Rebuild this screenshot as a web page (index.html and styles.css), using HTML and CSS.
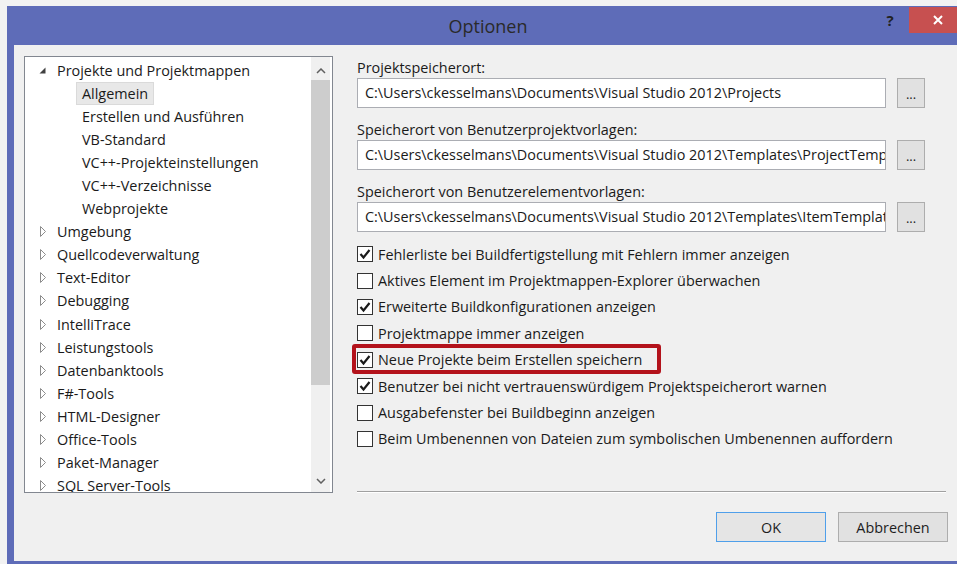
FILE: index.html
```html
<!DOCTYPE html>
<html lang="de">
<head>
<meta charset="utf-8">
<title>Optionen</title>
<link rel="stylesheet" href="styles.css">
</head>
<body>
<div class="window">
  <header class="titlebar">
    <div class="spacer"></div>
    <h1 class="title">Optionen</h1>
    <div class="controls">
      <span class="help">?</span>
      <button class="close" type="button" aria-label="Schließen">
        <svg width="10" height="10" viewBox="0 0 10 10"><path d="M1 1 L9 9 M9 1 L1 9" stroke="#fff" stroke-width="2" fill="none"/></svg>
      </button>
    </div>
  </header>

  <div class="body">
    <div class="tree">
      <ul class="tree-list">
        <li class="node open"><span class="twisty"><svg width="7" height="7" viewBox="0 0 7 7"><polygon points="6.5,0.5 6.5,6.5 0.5,6.5" fill="#404040"/></svg></span>Projekte und Projektmappen</li>
        <li class="leaf"><span class="leaf-label selected">Allgemein</span></li>
        <li class="leaf"><span class="leaf-label">Erstellen und Ausführen</span></li>
        <li class="leaf"><span class="leaf-label">VB-Standard</span></li>
        <li class="leaf"><span class="leaf-label">VC++-Projekteinstellungen</span></li>
        <li class="leaf"><span class="leaf-label">VC++-Verzeichnisse</span></li>
        <li class="leaf"><span class="leaf-label">Webprojekte</span></li>
        <li class="node"><span class="twisty closed"><svg width="7" height="11" viewBox="0 0 7 11"><polygon points="0.5,0.5 5.5,5.5 0.5,10.5" fill="none" stroke="#8c8c8c"/></svg></span>Umgebung</li>
        <li class="node"><span class="twisty closed"><svg width="7" height="11" viewBox="0 0 7 11"><polygon points="0.5,0.5 5.5,5.5 0.5,10.5" fill="none" stroke="#8c8c8c"/></svg></span>Quellcodeverwaltung</li>
        <li class="node"><span class="twisty closed"><svg width="7" height="11" viewBox="0 0 7 11"><polygon points="0.5,0.5 5.5,5.5 0.5,10.5" fill="none" stroke="#8c8c8c"/></svg></span>Text-Editor</li>
        <li class="node"><span class="twisty closed"><svg width="7" height="11" viewBox="0 0 7 11"><polygon points="0.5,0.5 5.5,5.5 0.5,10.5" fill="none" stroke="#8c8c8c"/></svg></span>Debugging</li>
        <li class="node"><span class="twisty closed"><svg width="7" height="11" viewBox="0 0 7 11"><polygon points="0.5,0.5 5.5,5.5 0.5,10.5" fill="none" stroke="#8c8c8c"/></svg></span>IntelliTrace</li>
        <li class="node"><span class="twisty closed"><svg width="7" height="11" viewBox="0 0 7 11"><polygon points="0.5,0.5 5.5,5.5 0.5,10.5" fill="none" stroke="#8c8c8c"/></svg></span>Leistungstools</li>
        <li class="node"><span class="twisty closed"><svg width="7" height="11" viewBox="0 0 7 11"><polygon points="0.5,0.5 5.5,5.5 0.5,10.5" fill="none" stroke="#8c8c8c"/></svg></span>Datenbanktools</li>
        <li class="node"><span class="twisty closed"><svg width="7" height="11" viewBox="0 0 7 11"><polygon points="0.5,0.5 5.5,5.5 0.5,10.5" fill="none" stroke="#8c8c8c"/></svg></span>F#-Tools</li>
        <li class="node"><span class="twisty closed"><svg width="7" height="11" viewBox="0 0 7 11"><polygon points="0.5,0.5 5.5,5.5 0.5,10.5" fill="none" stroke="#8c8c8c"/></svg></span>HTML-Designer</li>
        <li class="node"><span class="twisty closed"><svg width="7" height="11" viewBox="0 0 7 11"><polygon points="0.5,0.5 5.5,5.5 0.5,10.5" fill="none" stroke="#8c8c8c"/></svg></span>Office-Tools</li>
        <li class="node"><span class="twisty closed"><svg width="7" height="11" viewBox="0 0 7 11"><polygon points="0.5,0.5 5.5,5.5 0.5,10.5" fill="none" stroke="#8c8c8c"/></svg></span>Paket-Manager</li>
        <li class="node"><span class="twisty closed"><svg width="7" height="11" viewBox="0 0 7 11"><polygon points="0.5,0.5 5.5,5.5 0.5,10.5" fill="none" stroke="#8c8c8c"/></svg></span>SQL Server-Tools</li>
      </ul>
      <div class="scrollbar">
        <div class="sb-btn up"><svg width="10" height="6" viewBox="0 0 10 6"><path d="M1 5 L5 1 L9 5" fill="none" stroke="#606060" stroke-width="1.5"/></svg></div>
        <div class="sb-track"><div class="sb-thumb"></div></div>
        <div class="sb-btn down"><svg width="10" height="6" viewBox="0 0 10 6"><path d="M1 1 L5 5 L9 1" fill="none" stroke="#606060" stroke-width="1.5"/></svg></div>
      </div>
    </div>

    <div class="pane">
      <div class="field">
        <label class="field-label">Projektspeicherort:</label>
        <div class="path-row">
          <div class="path">C:\Users\ckesselmans\Documents\Visual Studio 2012\Projects</div>
          <button class="browse" type="button">...</button>
        </div>
      </div>
      <div class="field">
        <label class="field-label">Speicherort von Benutzerprojektvorlagen:</label>
        <div class="path-row">
          <div class="path">C:\Users\ckesselmans\Documents\Visual Studio 2012\Templates\ProjectTemplates</div>
          <button class="browse" type="button">...</button>
        </div>
      </div>
      <div class="field">
        <label class="field-label">Speicherort von Benutzerelementvorlagen:</label>
        <div class="path-row">
          <div class="path">C:\Users\ckesselmans\Documents\Visual Studio 2012\Templates\ItemTemplates</div>
          <button class="browse" type="button">...</button>
        </div>
      </div>

      <ul class="checks">
        <li><span class="box checked"><svg width="14" height="14" viewBox="0 0 14 14"><path d="M2.5 7 L5.5 10.5 L11.5 3" fill="none" stroke="#1a1a1a" stroke-width="2.2"/></svg></span>Fehlerliste bei Buildfertigstellung mit Fehlern immer anzeigen</li>
        <li><span class="box"></span>Aktives Element im Projektmappen-Explorer überwachen</li>
        <li><span class="box checked"><svg width="14" height="14" viewBox="0 0 14 14"><path d="M2.5 7 L5.5 10.5 L11.5 3" fill="none" stroke="#1a1a1a" stroke-width="2.2"/></svg></span>Erweiterte Buildkonfigurationen anzeigen</li>
        <li><span class="box"></span>Projektmappe immer anzeigen</li>
        <li class="flagged"><span class="box checked"><svg width="14" height="14" viewBox="0 0 14 14"><path d="M2.5 7 L5.5 10.5 L11.5 3" fill="none" stroke="#1a1a1a" stroke-width="2.2"/></svg></span>Neue Projekte beim Erstellen speichern<span class="mark"></span></li>
        <li><span class="box checked"><svg width="14" height="14" viewBox="0 0 14 14"><path d="M2.5 7 L5.5 10.5 L11.5 3" fill="none" stroke="#1a1a1a" stroke-width="2.2"/></svg></span>Benutzer bei nicht vertrauenswürdigem Projektspeicherort warnen</li>
        <li><span class="box"></span>Ausgabefenster bei Buildbeginn anzeigen</li>
        <li><span class="box"></span>Beim Umbenennen von Dateien zum symbolischen Umbenennen auffordern</li>
      </ul>

      <footer class="footer">
        <div class="separator"></div>
        <div class="buttons">
          <button class="btn default" type="button">OK</button>
          <button class="btn" type="button">Abbrechen</button>
        </div>
      </footer>
    </div>
  </div>
</div>
</body>
</html>
```

FILE: styles.css
```css
html, body {
  margin: 0;
  padding: 0;
}

body {
  background: #f2f2f2;
  overflow: hidden;
  font-family: "Open Sans", "Noto Sans", sans-serif;
  font-size: 14.4px;
  color: #1a1a1a;
}

/* dialog frame */
.window {
  margin: 6px 0 0 7px;
  width: 962px;
  height: 562px;
  background: #5e6cb8;
  display: flex;
  flex-direction: column;
}

.titlebar {
  height: 39px;
  flex: none;
  display: grid;
  grid-template-columns: 1fr auto 1fr;
  align-items: center;
}

.title {
  margin: 0;
  font-size: 18px;
  font-weight: normal;
  color: #2a2a2a;
  line-height: 1;
}

.controls {
  justify-self: end;
  align-self: start;
  display: flex;
  align-items: center;
  margin-top: 1px;
  padding-right: 7px;
}

.help {
  width: 20px;
  margin-right: 9px;
  text-align: center;
  font-weight: bold;
  font-size: 15px;
  color: #222;
  line-height: 26px;
}

.close {
  width: 53px;
  height: 26px;
  border: 0;
  padding: 0 0 0 4px;
  background: #c75050;
  display: flex;
  align-items: center;
  justify-content: center;
}

.body {
  flex: 1;
  margin: 0 7px 7px;
  background: #f0f0f0;
  display: flex;
  padding: 11px 0 0 10px;
}

/* category tree */
.tree {
  flex: none;
  width: 309px;
  height: 437px;
  box-sizing: border-box;
  border: 1px solid #828790;
  background: #fff;
  display: flex;
  overflow: hidden;
}

.tree-list {
  flex: 1;
  margin: 0;
  padding: 1.5px 0 0;
  list-style: none;
  overflow: hidden;
}

.tree-list li {
  height: 23.1px;
  display: flex;
  align-items: center;
  white-space: nowrap;
}

.node {
  padding-left: 14px;
}

.twisty {
  width: 18px;
  flex: none;
  display: flex;
  align-items: center;
}

.twisty.closed svg {
  margin-left: 1px;
}

.leaf {
  padding-left: 51px;
}

.leaf-label {
  padding: 0 5px;
  border: 1px solid transparent;
  line-height: 21px;
}

.leaf-label.selected {
  background: #e8e8e8;
  border-color: #dadada;
}

.scrollbar {
  width: 19px;
  margin-right: 2px;
  flex: none;
  display: flex;
  flex-direction: column;
  background: #f0f0f0;
}

.sb-btn {
  height: 23px;
  flex: none;
  display: flex;
  justify-content: center;
  align-items: center;
}

.sb-btn.up {
  padding-top: 4px;
  box-sizing: border-box;
}

.sb-track {
  flex: 1;
}

.sb-thumb {
  height: 305px;
  background: #cdcdcd;
}

/* settings pane */
.pane {
  flex: 1;
  margin-left: 24px;
  padding: 1px 14px 0 0;
  display: flex;
  flex-direction: column;
}

.field {
  margin-bottom: 11px;
}

.field:nth-child(3) {
  margin-bottom: 0;
}

.field-label {
  display: block;
  height: 21px;
  line-height: 21px;
}

.path-row {
  display: flex;
  align-items: center;
  gap: 11px;
}

.path {
  width: 529px;
  height: 30px;
  box-sizing: border-box;
  border: 1px solid #abadb3;
  background: #fff;
  padding: 0 0 0 7px;
  line-height: 28px;
  white-space: nowrap;
  overflow: hidden;
}

.browse {
  width: 28px;
  height: 30px;
  box-sizing: border-box;
  border: 1px solid #adadad;
  background: #e1e1e1;
  font-family: inherit;
  font-size: 13px;
  color: #1e1e1e;
  padding: 3px 0 0;
  margin-top: -1px;
}

.checks {
  list-style: none;
  margin: 9px 0 0;
  padding: 0;
}

.checks li {
  height: 26.4px;
  display: flex;
  align-items: center;
  white-space: nowrap;
}

.box {
  width: 16px;
  height: 16px;
  flex: none;
  box-sizing: border-box;
  border: 1px solid #333;
  background: #fff;
  margin-right: 5px;
  display: flex;
  align-items: center;
  justify-content: center;
}

.flagged {
  position: relative;
}

/* red frame drawn over the row */
.mark {
  position: absolute;
  left: -5px;
  top: -2.6px;
  width: 309px;
  height: 30px;
  box-sizing: border-box;
  border: 4px solid #b3121b;
  border-radius: 3px;
}

.footer {
  margin-top: auto;
}

.separator {
  border-top: 1px solid #a0a0a0;
  border-bottom: 1px solid #fff;
  margin-right: 2px;
}

.buttons {
  display: flex;
  justify-content: flex-end;
  gap: 12px;
  margin-top: 19px;
  padding-bottom: 19px;
}

.btn {
  width: 110px;
  height: 30px;
  box-sizing: border-box;
  border: 1px solid #adadad;
  background: #e1e1e1;
  font-family: inherit;
  font-size: 14.4px;
  color: #1e1e1e;
  padding: 0;
}

.btn.default {
  border-color: #4f9fea;
  background: #e5e5e5;
}
```
